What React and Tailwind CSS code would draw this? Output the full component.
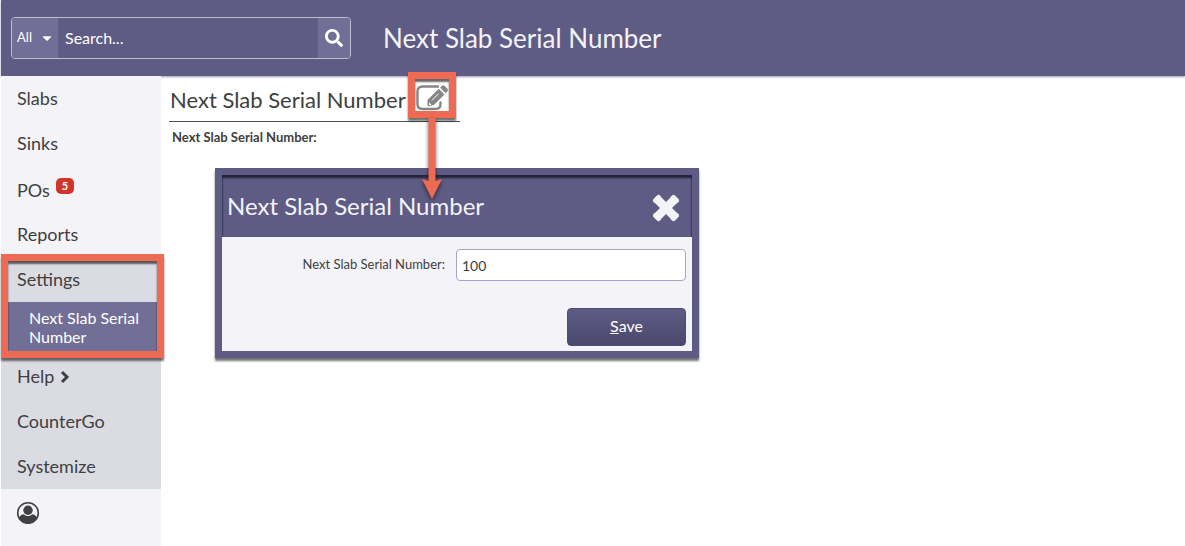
import { FaCaretDown, FaSearch } from "react-icons/fa";

const frameShadow =
  "border-[7px] border-[#ee6a53] shadow-[0_3px_2px_rgba(0,0,0,0.55),inset_0_3px_2px_rgba(0,0,0,0.6)]";

function EditIcon() {
  return (
    <svg viewBox="0 0 32 28" className="h-7 w-8" aria-hidden="true">
      <path
        d="M22 2.500H6.500Q1.500 2.500 1.500 7.500V20Q1.500 25 6.500 25H19.500Q24.500 25 24.500 20V18.500"
        fill="none"
        stroke="#868686"
        strokeWidth="2.400"
        strokeLinecap="round"
      />
      <path
        d="M22.800 4.800 28.500 10.500 17.900 21.100 11.500 22.200V16.100Z"
        fill="#868686"
      />
      <path d="M24.100 3.700 26 1.800Q27.300.7 28.500 1.800L31.400 4.700Q32.400 6 31.400 7.300L29.600 9.200Z" fill="#868686" />
      <path d="M15.800 16.500 22.600 9.700" stroke="#fff" strokeWidth="1" />
      <path d="M13 18.300V20.900H15.600Z" fill="#fff" />
    </svg>
  );
}

function UserIcon() {
  return (
    <svg viewBox="0 0 24 24" className="size-6" aria-hidden="true">
      <circle cx="12" cy="12" r="10.300" fill="none" stroke="#404040" strokeWidth="1.600" />
      <circle cx="12" cy="9.300" r="4.700" fill="#404040" />
      <path
        d="M3 16.200C4.500 14.300 6.200 13.500 7.800 13.300 10 15.700 14 15.700 16.200 13.300 17.800 13.500 19.500 14.300 21 16.200 19.500 20.200 16 22.500 12 22.500S4.500 20.200 3 16.200Z"
        fill="#404040"
      />
    </svg>
  );
}

function ChevronIcon() {
  return (
    <svg viewBox="0 0 10 14" className="mt-[3px] ml-[6px] h-[14px] w-[10px]" aria-hidden="true">
      <path d="M2 2 7 7 2 12" fill="none" stroke="#404040" strokeWidth="3" />
    </svg>
  );
}

function CloseIcon() {
  return (
    <svg viewBox="0 0 28 28" className="size-7" aria-hidden="true">
      <path d="M5 5 23 23M23 5 5 23" stroke="#f3f3f8" strokeWidth="8.500" />
      <path
        d="M3.500 6.500 6.500 3.500M21.500 3.500 24.500 6.500M3.500 21.500 6.500 24.500M21.500 24.500 24.500 21.500"
        stroke="#f3f3f8"
        strokeWidth="5"
        strokeLinecap="round"
      />
    </svg>
  );
}

function NavLink({ children }) {
  return (
    <a href="#" className="flex h-[45px] items-center pb-[2px] pl-4">
      {children}
    </a>
  );
}

function Header() {
  return (
    <header className="flex h-[76px] items-center gap-8 bg-[#5e5c84] pl-[10px] shadow-[0_1px_2px_#9c9aba]">
      <form className="flex h-[42px] w-[340px] shrink-0 overflow-hidden rounded border border-[#bfbed0] text-white">
        <button type="button" className="flex w-[46px] items-center justify-end gap-2 bg-[#716f96] pr-1 text-[13px]">
          All
          <FaCaretDown className="size-[14px]" />
        </button>
        <input
          type="search"
          aria-label="Search"
          placeholder="Search..."
          className="min-w-0 flex-1 bg-transparent px-[7px] text-base outline-none placeholder:text-white"
        />
        <button type="submit" aria-label="Search" className="flex w-8 items-center justify-center bg-[#716f96]">
          <FaSearch className="size-[18px]" />
        </button>
      </form>
      <h1 className="text-[26px] leading-8 text-[#f3f3f8]">Next Slab Serial Number</h1>
    </header>
  );
}

function Sidebar() {
  return (
    <nav className="w-40 shrink-0 bg-[#f3f3f8] text-lg">
      <NavLink>Slabs</NavLink>
      <NavLink>Sinks</NavLink>
      <a href="#" className="flex h-[46px] items-center gap-[6px] pt-[2px] pl-4">
        POs
        <span className="mb-2 flex h-4 w-[18px] items-center justify-center rounded-[5px] bg-[#d13428] text-[11px] font-bold text-white">
          5
        </span>
      </a>
      <NavLink>Reports</NavLink>
      <div className="bg-[#dbdbe4]">
        <div className="relative">
          <NavLink>Settings</NavLink>
          <a
            href="#"
            className="flex h-[52px] items-center bg-[#716f96] pr-4 pb-[2px] pl-7 text-base leading-[19px] text-white"
          >
            Next Slab Serial Number
          </a>
          <span className={`pointer-events-none absolute -top-[3px] -right-[3px] -bottom-1 left-0 ${frameShadow}`} />
        </div>
        <NavLink>
          Help
          <ChevronIcon />
        </NavLink>
        <NavLink>CounterGo</NavLink>
        <NavLink>Systemize</NavLink>
      </div>
      <a href="#" aria-label="Account" className="flex h-12 items-center pl-[15px]">
        <UserIcon />
      </a>
    </nav>
  );
}

function Arrow() {
  return (
    <svg
      viewBox="0 0 30 82"
      className="pointer-events-none absolute top-full left-1/2 z-20 mt-1 h-[82px] w-[30px] -translate-x-1/2 drop-shadow-[0_2px_2px_rgba(0,0,0,0.6)]"
      aria-hidden="true"
    >
      <path d="M11.500 0H18.500V63L25 61 15 81 5 61 11.500 63Z" fill="#ee6a53" />
    </svg>
  );
}

function Dialog() {
  return (
    <section
      role="dialog"
      aria-labelledby="dialog-title"
      className="absolute top-[92px] left-[54px] w-[484px] border-[7px] border-[#5e5c84] bg-[#f3f3f8] shadow-[0_3px_2px_rgba(0,0,0,0.55)]"
    >
      <div className="flex h-[62px] items-center justify-between bg-[#5e5c84] pr-3 pl-[5px] shadow-[inset_0_3px_2px_#252338,inset_1px_0_1px_#4a486c,inset_-1px_0_1px_#4a486c]">
        <h2 id="dialog-title" className="text-2xl text-[#f3f3f8]">
          Next Slab Serial Number
        </h2>
        <button type="button" aria-label="Close" className="pt-[3px]">
          <CloseIcon />
        </button>
      </div>
      <form className="flex flex-col items-end gap-[27px] pt-3 pr-[6px] pb-[5px]">
        <div className="flex items-center gap-[11px]">
          <label htmlFor="serial" className="text-[13px]">
            Next Slab Serial Number:
          </label>
          <input
            id="serial"
            type="text"
            defaultValue="100"
            className="h-8 w-[230px] rounded border border-[#a6a5c9] bg-white px-[5px] text-sm outline-none"
          />
        </div>
        <button
          type="button"
          className="h-[38px] w-[119px] rounded border border-[#4e4b75] bg-linear-to-b from-[#5e5c84] to-[#4b486e] pb-[2px] text-base text-white"
        >
          <span className="underline">S</span>ave
        </button>
      </form>
    </section>
  );
}

export default function App() {
  return (
    <div className="flex min-h-screen flex-col bg-white pl-px font-[Lato,sans-serif] text-[#404040]">
      <Header />
      <div className="flex flex-1">
        <Sidebar />
        <main className="relative flex-1 pl-2">
          <div className="flex h-[46px] w-[291px] items-center border-b border-[#505050]">
            <h2 className="pt-[2px] pl-px text-[22px] whitespace-nowrap">Next Slab Serial Number</h2>
            <button type="button" aria-label="Edit" className="relative ml-[10px] pb-[2px]">
              <EditIcon />
              <span className={`pointer-events-none absolute -inset-x-2 -top-3 -bottom-1 ${frameShadow}`} />
              <Arrow />
            </button>
          </div>
          <p className="pt-[6px] pl-[3px] text-[13px] font-bold">Next Slab Serial Number:</p>
          <Dialog />
        </main>
      </div>
    </div>
  );
}
